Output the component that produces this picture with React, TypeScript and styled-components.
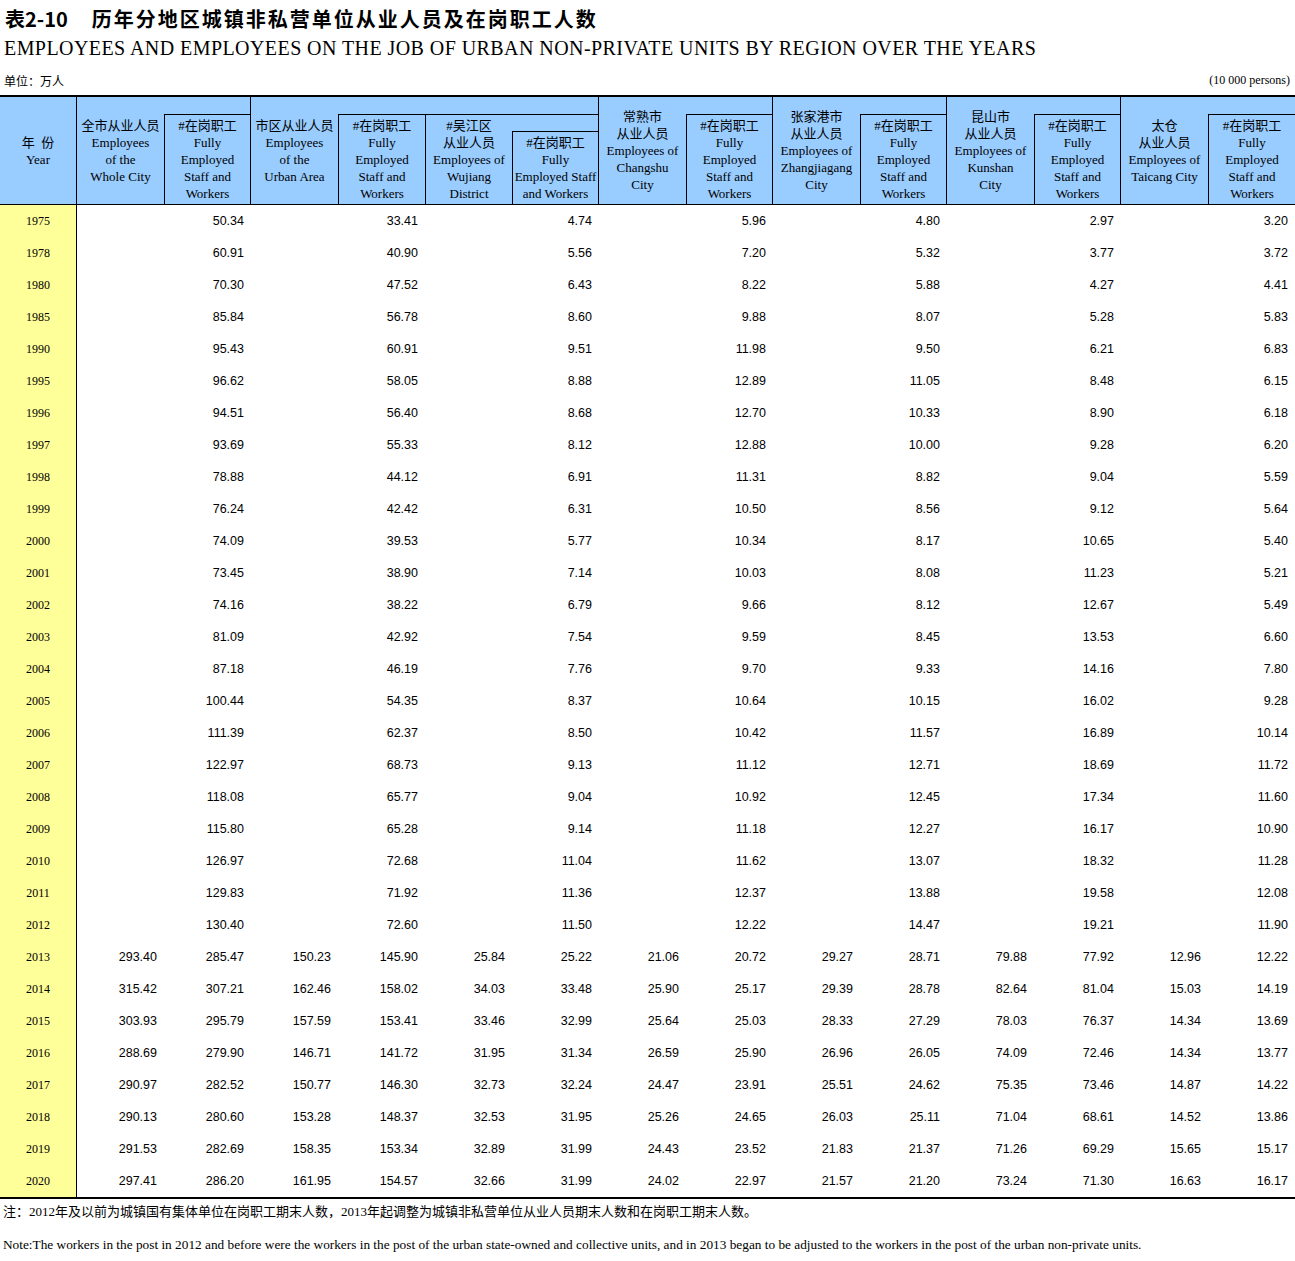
import React from "react";
import styled, { createGlobalStyle } from "styled-components";

const SERIF = `"Liberation Serif", "Noto Sans CJK SC", serif`;
const SANS = `"Liberation Sans", "Noto Sans CJK SC", sans-serif`;
const CJK = `"Noto Sans CJK SC", "Liberation Sans", sans-serif`;

const BLUE = "#99ccff";
const YELLOW = "#ffff99";

const GlobalStyle = createGlobalStyle`
  *, *::before, *::after {
    box-sizing: border-box;
  }
  body {
    margin: 0;
    background: #ffffff;
    color: #000000;
    font-family: ${SERIF};
  }
`;

// years up to 2012 only have the "fully employed" figures
const early: [string, string[]][] = [
  ["1975", ["50.34", "33.41", "4.74", "5.96", "4.80", "2.97", "3.20"]],
  ["1978", ["60.91", "40.90", "5.56", "7.20", "5.32", "3.77", "3.72"]],
  ["1980", ["70.30", "47.52", "6.43", "8.22", "5.88", "4.27", "4.41"]],
  ["1985", ["85.84", "56.78", "8.60", "9.88", "8.07", "5.28", "5.83"]],
  ["1990", ["95.43", "60.91", "9.51", "11.98", "9.50", "6.21", "6.83"]],
  ["1995", ["96.62", "58.05", "8.88", "12.89", "11.05", "8.48", "6.15"]],
  ["1996", ["94.51", "56.40", "8.68", "12.70", "10.33", "8.90", "6.18"]],
  ["1997", ["93.69", "55.33", "8.12", "12.88", "10.00", "9.28", "6.20"]],
  ["1998", ["78.88", "44.12", "6.91", "11.31", "8.82", "9.04", "5.59"]],
  ["1999", ["76.24", "42.42", "6.31", "10.50", "8.56", "9.12", "5.64"]],
  ["2000", ["74.09", "39.53", "5.77", "10.34", "8.17", "10.65", "5.40"]],
  ["2001", ["73.45", "38.90", "7.14", "10.03", "8.08", "11.23", "5.21"]],
  ["2002", ["74.16", "38.22", "6.79", "9.66", "8.12", "12.67", "5.49"]],
  ["2003", ["81.09", "42.92", "7.54", "9.59", "8.45", "13.53", "6.60"]],
  ["2004", ["87.18", "46.19", "7.76", "9.70", "9.33", "14.16", "7.80"]],
  ["2005", ["100.44", "54.35", "8.37", "10.64", "10.15", "16.02", "9.28"]],
  ["2006", ["111.39", "62.37", "8.50", "10.42", "11.57", "16.89", "10.14"]],
  ["2007", ["122.97", "68.73", "9.13", "11.12", "12.71", "18.69", "11.72"]],
  ["2008", ["118.08", "65.77", "9.04", "10.92", "12.45", "17.34", "11.60"]],
  ["2009", ["115.80", "65.28", "9.14", "11.18", "12.27", "16.17", "10.90"]],
  ["2010", ["126.97", "72.68", "11.04", "11.62", "13.07", "18.32", "11.28"]],
  ["2011", ["129.83", "71.92", "11.36", "12.37", "13.88", "19.58", "12.08"]],
  ["2012", ["130.40", "72.60", "11.50", "12.22", "14.47", "19.21", "11.90"]],
];

const late: [string, string[]][] = [
  ["2013", ["293.40", "285.47", "150.23", "145.90", "25.84", "25.22", "21.06", "20.72", "29.27", "28.71", "79.88", "77.92", "12.96", "12.22"]],
  ["2014", ["315.42", "307.21", "162.46", "158.02", "34.03", "33.48", "25.90", "25.17", "29.39", "28.78", "82.64", "81.04", "15.03", "14.19"]],
  ["2015", ["303.93", "295.79", "157.59", "153.41", "33.46", "32.99", "25.64", "25.03", "28.33", "27.29", "78.03", "76.37", "14.34", "13.69"]],
  ["2016", ["288.69", "279.90", "146.71", "141.72", "31.95", "31.34", "26.59", "25.90", "26.96", "26.05", "74.09", "72.46", "14.34", "13.77"]],
  ["2017", ["290.97", "282.52", "150.77", "146.30", "32.73", "32.24", "24.47", "23.91", "25.51", "24.62", "75.35", "73.46", "14.87", "14.22"]],
  ["2018", ["290.13", "280.60", "153.28", "148.37", "32.53", "31.95", "25.26", "24.65", "26.03", "25.11", "71.04", "68.61", "14.52", "13.86"]],
  ["2019", ["291.53", "282.69", "158.35", "153.34", "32.89", "31.99", "24.43", "23.52", "21.83", "21.37", "71.26", "69.29", "15.65", "15.17"]],
  ["2020", ["297.41", "286.20", "161.95", "154.57", "32.66", "31.99", "24.02", "22.97", "21.57", "21.20", "73.24", "71.30", "16.63", "16.17"]],
];

const rows: { year: string; values: string[] }[] = [
  ...early.map(([year, v]) => ({ year, values: v.flatMap((x) => ["", x]) })),
  ...late.map(([year, values]) => ({ year, values })),
];

const cities = [
  { zh: "常熟市", en: ["Employees of", "Changshu", "City"] },
  { zh: "张家港市", en: ["Employees of", "Zhangjiagang", "City"] },
  { zh: "昆山市", en: ["Employees of", "Kunshan", "City"] },
  { zh: "太仓", en: ["Employees of", "Taicang City"] },
];

const fullyLines = ["#在岗职工", "Fully", "Employed", "Staff and", "Workers"];

const App: React.FC = () => {
  return (
    <Page>
      <GlobalStyle />
      <Title>
        <TableNo>表2-10</TableNo>
        历年分地区城镇非私营单位从业人员及在岗职工人数
      </Title>
      <Subtitle>
        EMPLOYEES AND EMPLOYEES ON THE JOB OF URBAN NON-PRIVATE UNITS BY
        REGION OVER THE YEARS
      </Subtitle>
      <UnitRow>
        <UnitZh>单位：万人</UnitZh>
        <UnitEn>(10 000 persons)</UnitEn>
      </UnitRow>

      <Table>
        <Header>
          <YearHead>
            <span>年&nbsp;&nbsp;份</span>
            <span>Year</span>
          </YearHead>

          <Group $cols={2}>
            <HeadCell $area="1 / 1 / 4 / 2">
              <Lines lines={["全市从业人员", "Employees", "of the", "Whole City"]} />
            </HeadCell>
            <HeadCell $area="2 / 2 / 4 / 3" $top $left>
              <Lines lines={fullyLines} />
            </HeadCell>
          </Group>

          <Group $cols={4}>
            <HeadCell $area="1 / 1 / 4 / 2">
              <Lines lines={["市区从业人员", "Employees", "of the", "Urban Area"]} />
            </HeadCell>
            <HeadCell $area="2 / 2 / 4 / 3" $top $left>
              <Lines lines={fullyLines} />
            </HeadCell>
            <HeadCell $area="2 / 3 / 4 / 4" $top $left>
              <Lines lines={["#吴江区", "从业人员", "Employees of", "Wujiang", "District"]} />
            </HeadCell>
            <HeadCell $area="2 / 4 / 3 / 5" $top />
            <HeadCell $area="3 / 4 / 4 / 5" $top $left>
              <Lines lines={["#在岗职工", "Fully", "Employed Staff", "and Workers"]} />
            </HeadCell>
          </Group>

          {cities.map((c, i) => (
            <Group key={c.zh} $cols={2} $last={i === cities.length - 1}>
              <HeadCell $area="1 / 1 / 4 / 2">
                <Lines lines={[c.zh, "从业人员", ...c.en]} />
              </HeadCell>
              <HeadCell $area="2 / 2 / 4 / 3" $top $left>
                <Lines lines={fullyLines} />
              </HeadCell>
            </Group>
          ))}
        </Header>

        <Body>
          {rows.map((r) => (
            <Row key={r.year}>
              <YearCell>{r.year}</YearCell>
              {r.values.map((v, i) => (
                <NumCell key={i}>{v}</NumCell>
              ))}
            </Row>
          ))}
        </Body>
      </Table>

      <NoteZh>
        注：2012年及以前为城镇国有集体单位在岗职工期末人数，2013年起调整为城镇非私营单位从业人员期末人数和在岗职工期末人数。
      </NoteZh>
      <NoteEn>
        Note:The workers in the post in 2012 and before were the workers in the
        post of the urban state-owned and collective units, and in 2013 began
        to be adjusted to the workers in the post of the urban non-private
        units.
      </NoteEn>
    </Page>
  );
};

const Lines: React.FC<{ lines: string[] }> = ({ lines }) => (
  <>
    {lines.map((l) => (
      <span key={l}>{l}</span>
    ))}
  </>
);

const Page = styled.div`
  width: 1295px;
  padding-bottom: 8px;
`;

const Title = styled.div`
  display: flex;
  align-items: center;
  height: 36px;
  padding-left: 5px;
  font-family: ${CJK};
  font-size: 20px;
  font-weight: 700;
  letter-spacing: 2px;
`;

const TableNo = styled.span`
  margin-right: 24px;
  letter-spacing: 0;
`;

const Subtitle = styled.div`
  height: 24px;
  line-height: 24px;
  padding-left: 4px;
  font-family: ${SERIF};
  font-size: 20px;
  letter-spacing: 0.43px;
  white-space: nowrap;
`;

const UnitRow = styled.div`
  display: flex;
  justify-content: space-between;
  align-items: center;
  height: 16px;
  margin-top: 12px;
  padding: 0 5px 0 4px;
`;

const UnitZh = styled.span`
  font-family: ${CJK};
  font-size: 12px;
`;

const UnitEn = styled.span`
  font-family: ${SERIF};
  font-size: 12px;
`;

const Table = styled.div`
  margin-top: 7px;
  border-top: 2px solid #000;
  border-bottom: 2px solid #000;
`;

const Header = styled.div`
  display: flex;
  height: 108px;
  background: ${BLUE};
  border-bottom: 1px solid #000;
  font-family: ${SERIF};
  font-size: 13px;
  line-height: 17px;
`;

const YearHead = styled.div`
  width: 77px;
  flex: none;
  display: flex;
  flex-direction: column;
  align-items: center;
  justify-content: center;
  border-right: 1px solid #000;
`;

const Group = styled.div<{ $cols: number; $last?: boolean }>`
  display: grid;
  grid-template-columns: repeat(${({ $cols }) => $cols - 1}, 87px) 1fr;
  grid-template-rows: 17px 17px 1fr;
  width: ${({ $cols }) => $cols * 87}px;
  flex: ${({ $last }) => ($last ? "1" : "none")};
  border-right: ${({ $last }) => ($last ? "none" : "1px solid #000")};
`;

const HeadCell = styled.div<{ $area: string; $top?: boolean; $left?: boolean }>`
  grid-area: ${({ $area }) => $area};
  display: flex;
  flex-direction: column;
  align-items: center;
  justify-content: center;
  text-align: center;
  white-space: nowrap;
  border-top: ${({ $top }) => ($top ? "1px solid #000" : "none")};
  border-left: ${({ $left }) => ($left ? "1px solid #000" : "none")};
`;

const Body = styled.div`
  display: flex;
  flex-direction: column;
`;

const Row = styled.div`
  display: grid;
  grid-template-columns: 77px repeat(13, 87px) 1fr;
  height: 32px;
  align-items: center;
`;

const YearCell = styled.div`
  height: 100%;
  display: flex;
  align-items: center;
  justify-content: center;
  background: ${YELLOW};
  border-right: 1px solid #000;
  font-family: ${SERIF};
  font-size: 12px;
`;

const NumCell = styled.div`
  text-align: right;
  padding-right: 7px;
  font-family: ${SANS};
  font-size: 12.5px;
`;

const NoteZh = styled.div`
  margin-top: 4px;
  padding-left: 3px;
  height: 18px;
  line-height: 18px;
  font-family: ${SERIF};
  font-size: 13px;
  white-space: nowrap;
`;

const NoteEn = styled.div`
  margin-top: 15px;
  padding-left: 3px;
  height: 18px;
  line-height: 18px;
  font-family: ${SERIF};
  font-size: 13.3px;
  white-space: nowrap;
`;

export default App;
